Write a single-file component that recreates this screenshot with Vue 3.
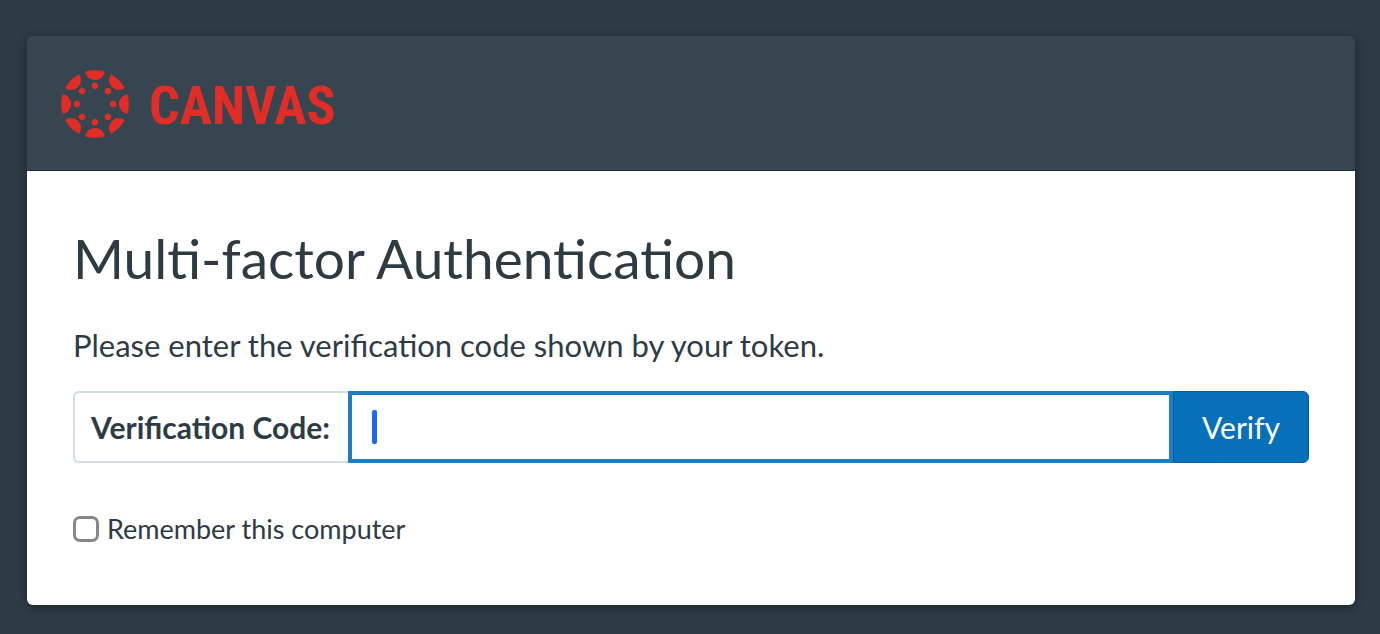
<template>
  <main class="page">
    <section class="card">
      <header class="card-header">
        <svg class="logo-mark" viewBox="-34 -34 68 68" aria-hidden="true">
          <g v-for="angle in angles" :key="angle" :transform="`rotate(${angle})`">
            <path d="M-9.8 -32.4A34 34 0 0 1 9.8 -32.4A9.9 9.9 0 0 1 -9.8 -32.4Z" />
            <circle cx="0" cy="-18.2" r="3.2" />
          </g>
        </svg>
        <span class="logo-text">CANVAS</span>
      </header>

      <form class="card-body" @submit.prevent>
        <h1>Multi-factor Authentication</h1>
        <p>Please enter the verification code shown by your token.</p>

        <div class="code-row">
          <label class="code-label" for="code">Verification Code:</label>
          <div class="code-field">
            <input id="code" v-model="code" type="text" autocomplete="one-time-code">
            <span v-if="!code" class="caret"></span>
          </div>
          <button type="submit">Verify</button>
        </div>

        <div class="remember">
          <input id="remember" v-model="remember" type="checkbox">
          <label for="remember">Remember this computer</label>
        </div>
      </form>
    </section>
  </main>
</template>

<script setup>
import { ref } from 'vue'

const code = ref('')
const remember = ref(false)

const angles = [0, 45, 90, 135, 180, 225, 270, 315]
</script>

<style>
body { background: #2d3b45; }
</style>

<style scoped>
.page { padding: 36px 25px 29px 27px; font-family: Lato, "Liberation Sans", sans-serif; color: #2d3b45; }
.card { border-radius: 6px; box-shadow: 0 2px 10px rgba(0, 0, 0, 0.4); }

.card-header { display: flex; align-items: center; gap: 20px; height: 135px; padding: 2px 34px 0; box-sizing: border-box; background: #36454f; border-bottom: 1px solid #1f303c; border-radius: 6px 6px 0 0; }
.logo-mark { width: 68px; height: 68px; fill: #e22d27; }
.logo-text { padding-top: 4px; font: bold 54px/68px "Liberation Sans Narrow", "Roboto Condensed", Roboto, sans-serif; color: #e22d27; }

.card-body { padding: 52px 46px 56px; background: #fff; border-radius: 0 0 6px 6px; }
h1 { margin: 0; font-size: 55px; font-weight: 400; line-height: 70px; }
p { margin: 32px 0 26px; font-size: 31px; line-height: 40px; }

.code-row { display: flex; height: 72px; }
.code-label { display: flex; align-items: center; padding: 0 18px 0 16px; border: 2px solid #d3dde6; border-right: 0; border-radius: 6px 0 0 6px; font-size: 30px; font-weight: 700; }
.code-field { position: relative; flex: 1; min-width: 0; }
.code-field input { width: 100%; height: 100%; box-sizing: border-box; margin: 0; padding: 0 20px; border: 4px solid #1d7fc2; border-radius: 0; outline: 0; background: #fff; font: inherit; font-size: 30px; color: inherit; }
.caret { position: absolute; left: 24px; top: 19px; width: 5px; height: 34px; border-radius: 2px; background: #1769ff; pointer-events: none; }
button { padding: 0 28px; border: 1px solid #065a9f; border-radius: 0 6px 6px 0; background: #0770ba; color: #fff; font: inherit; font-size: 30px; }

.remember { display: flex; align-items: center; gap: 8px; margin-top: 46px; font-size: 27px; line-height: 40px; }
.remember input { appearance: none; width: 26px; height: 26px; box-sizing: border-box; margin: 0; border: 3px solid #87878b; border-radius: 7px; background: #fff; }
.remember input:checked { background: #0770ba; }
</style>
